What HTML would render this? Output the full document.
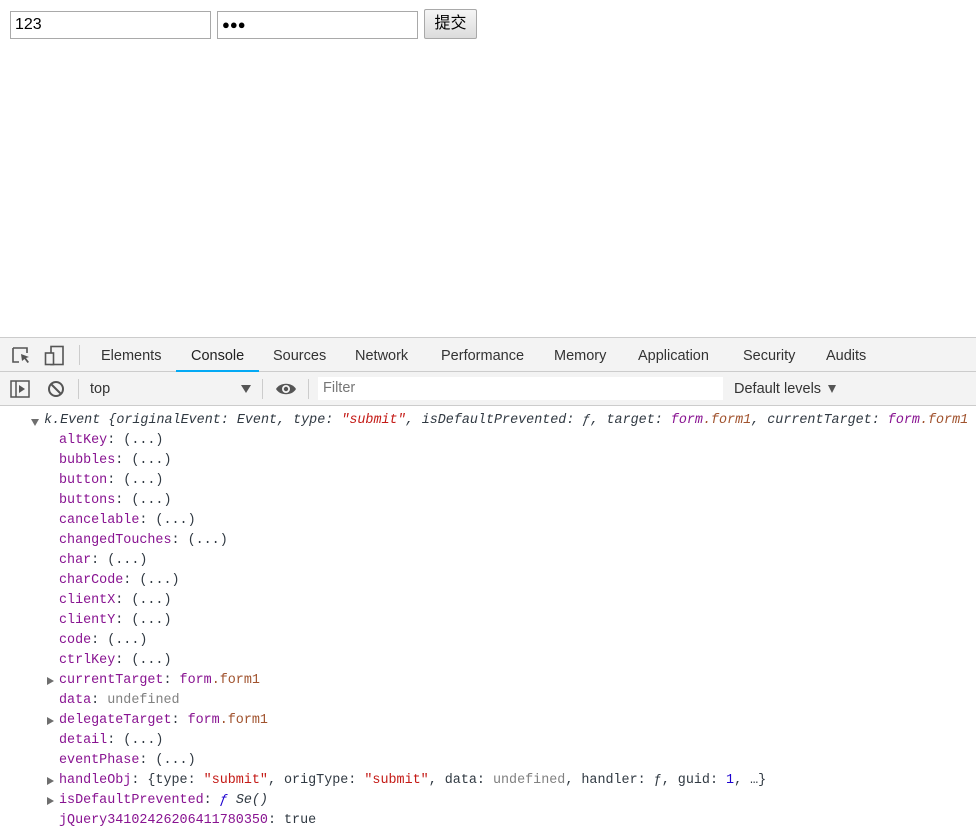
<!DOCTYPE html>
<html><head><meta charset="utf-8"><style>
*{margin:0;padding:0;box-sizing:border-box}
body{width:976px;height:818px;overflow:hidden;background:#fff;font-family:"Liberation Sans",sans-serif;position:relative}
.inp{position:absolute;top:11px;height:28px;border:1px solid #a9a9a9;background:#fff;font-size:16px;padding:2px 4px;line-height:22px}
.btn{position:absolute;left:424px;top:9px;width:53px;height:30px;border:1px solid #a9a9a9;border-radius:2px;background:linear-gradient(#f5f5f5,#dcdcdc);font-family:"Liberation Sans","Noto Sans CJK SC",sans-serif;font-size:16px;text-align:center;line-height:28px}
.tb{position:absolute;left:0;top:337px;width:976px;height:35px;background:#f3f3f3;border-top:1px solid #ccc;border-bottom:1px solid #ccc}
.tab{position:absolute;top:0;height:34px;line-height:36px;font-size:14.5px;color:#333}
.tb2{position:absolute;left:0;top:372px;width:976px;height:34px;background:#f3f3f3;border-bottom:1px solid #ccc}
.sep{position:absolute;width:1px;background:#ccc}
.con{position:absolute;left:0;top:411px;width:976px;overflow:hidden;font-family:"Liberation Mono",monospace;font-size:13.4px;color:#303942;white-space:nowrap}
.l{height:20px;line-height:20px;position:relative}
.k{color:#881391}.s{color:#c41a16}.g{color:#808080}.o{color:#a0522d}.u{color:#881391}.n{color:#1c00cf}
.tri{position:absolute;width:0;height:0;border-left:7px solid #6e6e6e;border-top:4px solid transparent;border-bottom:4px solid transparent;top:6px;left:47px}
</style></head><body>
<div class="inp" style="left:10px;width:201px">123</div>
<div class="inp" style="left:217px;width:201px;font-size:13px">●●●</div>
<div class="btn">提交</div>

<div class="tb">
<svg style="position:absolute;left:12px;top:9px" width="20" height="18" viewBox="0 0 20 18"><path d="M1 1h14v5M1 1v14h6" fill="none" stroke="#555" stroke-width="1.6"/><path d="M9 7l8 3-3 1 3 4-1.5 1-3-4-2.5 2z" fill="#555"/></svg>
<svg style="position:absolute;left:44px;top:7px" width="22" height="22" viewBox="0 0 22 22"><rect x="7" y="1.5" width="12" height="18" fill="none" stroke="#555" stroke-width="1.6"/><rect x="1.5" y="8" width="8" height="11.5" fill="#f3f3f3" stroke="#555" stroke-width="1.6"/></svg>
<div class="sep" style="left:79px;top:7px;height:20px"></div>
<div class="tab" style="left:101px">Elements</div>
<div class="tab" style="left:191px;color:#222">Console</div>
<div style="position:absolute;left:176px;top:32px;width:83px;height:2px;background:#03a9f4"></div>
<div class="tab" style="left:273px">Sources</div>
<div class="tab" style="left:355px">Network</div>
<div class="tab" style="left:441px">Performance</div>
<div class="tab" style="left:554px">Memory</div>
<div class="tab" style="left:638px">Application</div>
<div class="tab" style="left:743px">Security</div>
<div class="tab" style="left:826px">Audits</div>
</div>

<div class="tb2">
<svg style="position:absolute;left:10px;top:8px" width="20" height="18" viewBox="0 0 20 18"><rect x="1" y="1" width="18" height="16" fill="none" stroke="#555" stroke-width="1.5"/><path d="M6 1v16" stroke="#555" stroke-width="1.5"/><path d="M9 5l6 4-6 4z" fill="#555"/></svg>
<svg style="position:absolute;left:47px;top:8px" width="18" height="18" viewBox="0 0 18 18"><circle cx="9" cy="9" r="7" fill="none" stroke="#555" stroke-width="2"/><path d="M4 4l10 10" stroke="#555" stroke-width="2"/></svg>
<div class="sep" style="left:78px;top:7px;height:20px"></div>
<div style="position:absolute;left:90px;top:0;line-height:34px;font-size:14.5px;color:#333">top</div>
<div style="position:absolute;left:241px;top:13px;border-top:8px solid #555;border-left:5px solid transparent;border-right:5px solid transparent"></div>
<div class="sep" style="left:262px;top:7px;height:20px"></div>
<svg style="position:absolute;left:275px;top:9px" width="22" height="16" viewBox="0 0 22 16"><path d="M1 8C5 1 17 1 21 8 17 15 5 15 1 8z" fill="#555"/><circle cx="11" cy="8" r="4" fill="#f3f3f3"/><circle cx="11" cy="8" r="2.2" fill="#555"/></svg>
<div class="sep" style="left:308px;top:7px;height:20px"></div>
<div style="position:absolute;left:318px;top:5px;width:405px;height:23px;background:#fff;font-size:14.5px;color:#777;line-height:23px;padding-left:5px">Filter</div>
<div style="position:absolute;left:734px;top:0;line-height:34px;font-size:14.5px;color:#333">Default levels</div>
<div style="position:absolute;left:828px;top:13px;border-top:8px solid #555;border-left:4px solid transparent;border-right:4px solid transparent"></div>
</div>

<div class="con"><div class="l" style="padding-left:44px;font-style:italic"><span style="position:absolute;left:31px;top:8px;border-top:7px solid #6e6e6e;border-left:4px solid transparent;border-right:4px solid transparent"></span>k.Event {originalEvent: Event, type: <span class="s">"submit"</span>, isDefaultPrevented: ƒ, target: <span class="u">form</span><span class="o">.form1</span>, currentTarget: <span class="u">form</span><span class="o">.form1</span></div><div class="l" style="padding-left:59px"><span class="k">altKey</span>: (...)</div><div class="l" style="padding-left:59px"><span class="k">bubbles</span>: (...)</div><div class="l" style="padding-left:59px"><span class="k">button</span>: (...)</div><div class="l" style="padding-left:59px"><span class="k">buttons</span>: (...)</div><div class="l" style="padding-left:59px"><span class="k">cancelable</span>: (...)</div><div class="l" style="padding-left:59px"><span class="k">changedTouches</span>: (...)</div><div class="l" style="padding-left:59px"><span class="k">char</span>: (...)</div><div class="l" style="padding-left:59px"><span class="k">charCode</span>: (...)</div><div class="l" style="padding-left:59px"><span class="k">clientX</span>: (...)</div><div class="l" style="padding-left:59px"><span class="k">clientY</span>: (...)</div><div class="l" style="padding-left:59px"><span class="k">code</span>: (...)</div><div class="l" style="padding-left:59px"><span class="k">ctrlKey</span>: (...)</div><div class="l" style="padding-left:59px"><span class="tri"></span><span class="k">currentTarget</span>: <span class="u">form</span><span class="o">.form1</span></div><div class="l" style="padding-left:59px"><span class="k">data</span>: <span class="g">undefined</span></div><div class="l" style="padding-left:59px"><span class="tri"></span><span class="k">delegateTarget</span>: <span class="u">form</span><span class="o">.form1</span></div><div class="l" style="padding-left:59px"><span class="k">detail</span>: (...)</div><div class="l" style="padding-left:59px"><span class="k">eventPhase</span>: (...)</div><div class="l" style="padding-left:59px"><span class="tri"></span><span class="k">handleObj</span>: {type: <span class="s">"submit"</span>, origType: <span class="s">"submit"</span>, data: <span class="g">undefined</span>, handler: ƒ, guid: <span class="n">1</span>, …}</div><div class="l" style="padding-left:59px"><span class="tri"></span><span class="k">isDefaultPrevented</span>: <span class="n" style="font-style:italic">ƒ</span> <span style="font-style:italic">Se()</span></div><div class="l" style="padding-left:59px"><span class="k">jQuery34102426206411780350</span>: true</div></div>
</body></html>
